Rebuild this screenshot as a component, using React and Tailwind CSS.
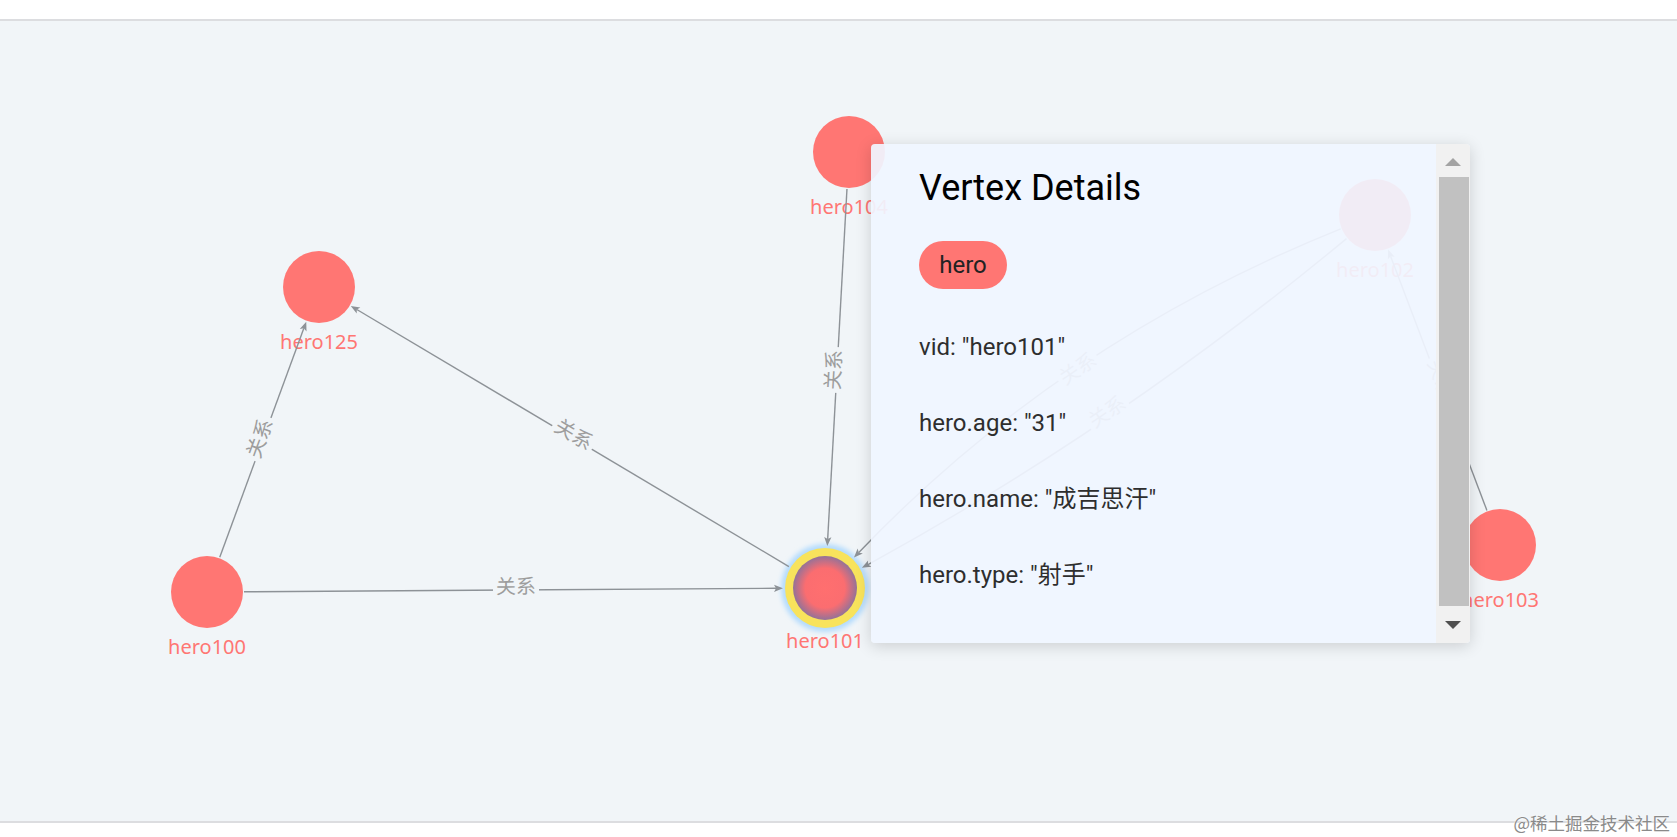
import React from 'react';

const RED = '#ff7673';
const EDGE = '#8d9297';
const CANVAS = '#f1f5f8';

const nodes = [
  { id: 'hero125', x: 319, y: 266 },
  { id: 'hero104', x: 849, y: 131 },
  { id: 'hero100', x: 207, y: 571 },
  { id: 'hero101', x: 825, y: 567, r: 41, active: true },
  { id: 'hero102', x: 1375, y: 194 },
  { id: 'hero103', x: 1500, y: 524 },
];
const byId = Object.fromEntries(nodes.map((n) => [n.id, n]));

const edges = [
  { s: 'hero100', t: 'hero125' },
  { s: 'hero101', t: 'hero125' },
  { s: 'hero100', t: 'hero101' },
  { s: 'hero104', t: 'hero101' },
  { s: 'hero102', t: 'hero101', bend: 72 },
  { s: 'hero102', t: 'hero101', bend: -32 },
  { s: 'hero103', t: 'hero102' },
];

// geometry of one edge: line (or quad curve), arrow head and label spot
function geom(e) {
  const a = byId[e.s];
  const b = byId[e.t];
  const ra = (a.r || 36) + 1;
  const rb = (b.r || 36) + 1;
  const dx = b.x - a.x;
  const dy = b.y - a.y;
  const len = Math.hypot(dx, dy);
  const nx = -dy / len;
  const ny = dx / len;
  const bend = e.bend || 0;
  const cx = (a.x + b.x) / 2 + nx * bend;
  const cy = (a.y + b.y) / 2 + ny * bend;

  const d1 = Math.hypot(cx - a.x, cy - a.y);
  const sx = (cx - a.x) / d1;
  const sy = (cy - a.y) / d1;
  const d2 = Math.hypot(b.x - cx, b.y - cy);
  const ex = (b.x - cx) / d2;
  const ey = (b.y - cy) / d2;

  const p0 = [a.x + sx * ra, a.y + sy * ra];
  const tip = [b.x - ex * rb, b.y - ey * rb];
  const notch = [tip[0] - ex * 7, tip[1] - ey * 7];
  const base = [tip[0] - ex * 9, tip[1] - ey * 9];
  const arrow = [
    tip,
    [base[0] - ey * 3.6, base[1] + ex * 3.6],
    notch,
    [base[0] + ey * 3.6, base[1] - ex * 3.6],
  ]
    .map((p) => p.join(','))
    .join(' ');

  const d = bend
    ? `M${p0[0]},${p0[1]} Q${cx},${cy} ${notch[0]},${notch[1]}`
    : `M${p0[0]},${p0[1]} L${notch[0]},${notch[1]}`;

  const lx = bend ? 0.25 * a.x + 0.5 * cx + 0.25 * b.x : (a.x + b.x) / 2;
  const ly = bend ? 0.25 * a.y + 0.5 * cy + 0.25 * b.y : (a.y + b.y) / 2;
  let ang = (Math.atan2(dy, dx) * 180) / Math.PI;
  if (ang > 90) ang -= 180;
  if (ang < -90) ang += 180;

  return { d, arrow, lx, ly, ang };
}

const Graph = () => (
  <svg className="absolute inset-0" width="1677" height="800">
    <defs>
      <filter id="glow" x="-50%" y="-50%" width="200%" height="200%">
        <feGaussianBlur stdDeviation="2.5" />
      </filter>
      <radialGradient id="activeFill" cx="50%" cy="50%" r="50%">
        <stop offset="0%" stopColor="#ff6f6f" />
        <stop offset="62%" stopColor="#fb6d70" />
        <stop offset="100%" stopColor="#947298" />
      </radialGradient>
    </defs>

    {nodes.map((n) => (
      <g key={n.id}>
        {n.active ? (
          <>
            <circle cx={n.x} cy={n.y} r="44" fill="#b3dbfd" filter="url(#glow)" />
            <circle cx={n.x} cy={n.y} r="40" fill="#f8e35c" />
            <circle cx={n.x} cy={n.y} r="32" fill="url(#activeFill)" />
          </>
        ) : (
          <circle cx={n.x} cy={n.y} r="36" fill={RED} />
        )}
        <text
          x={n.x}
          y={n.y + (n.active ? 60 : 62)}
          textAnchor="middle"
          fontSize="20"
          fontFamily="'Noto Sans', sans-serif"
          fill={RED}
        >
          {n.id}
        </text>
      </g>
    ))}

    {edges.map((e, i) => {
      const g = geom(e);
      return (
        <g key={i}>
          <path d={g.d} fill="none" stroke={EDGE} strokeWidth="1.4" />
          <polygon points={g.arrow} fill={EDGE} />
          <g transform={`translate(${g.lx} ${g.ly}) rotate(${g.ang})`}>
            <rect x="-23" y="-16" width="46" height="23" fill={CANVAS} />
            <text
              y="-5"
              textAnchor="middle"
              dominantBaseline="central"
              fontSize="20"
              fontFamily="'Noto Sans CJK SC', sans-serif"
              fill="#9d9d9d"
            >
              关系
            </text>
          </g>
        </g>
      );
    })}
  </svg>
);

const props = [
  ['vid', 'hero101'],
  ['hero.age', '31'],
  ['hero.name', '成吉思汗'],
  ['hero.type', '射手'],
];

const DetailsPanel = () => (
  <div className="absolute left-[871px] top-[123px] w-[599px] h-[499px] flex overflow-hidden rounded-[4px] bg-[rgba(240,245,255,0.93)] shadow-[0_3px_16px_rgba(0,0,0,0.16)] font-['Roboto','Noto_Sans_CJK_SC',sans-serif]">
    <div className="flex-1 pl-[48px] pt-[23px]">
      <h2 className="h-[42px] leading-[42px] text-[36px] font-normal text-black">Vertex Details</h2>
      <div className="mt-[32px] w-[88px] h-[48px] rounded-full bg-[#ff7673] flex items-center justify-center text-[24px] text-[#222]">
        hero
      </div>
      <div className="mt-[20px]">
        {props.map(([k, v]) => (
          <div key={k} className="h-[76px] flex items-center text-[24px] text-[#2e2e2e]">
            {k}: "{v}"
          </div>
        ))}
      </div>
    </div>

    {/* scrollbar */}
    <div className="w-[34px] bg-[#f1f1f1] flex flex-col">
      <div className="h-[33px] flex items-center justify-center pt-[2px]">
        <svg width="16" height="8" viewBox="0 0 16 8">
          <path d="M8 0 L16 8 L0 8 Z" fill="#a3a3a3" />
        </svg>
      </div>
      <div className="flex-1 ml-[3px] mr-[1px] bg-[#c1c1c1]" />
      <div className="h-[37px] flex items-center justify-center">
        <svg width="16" height="8" viewBox="0 0 16 8">
          <path d="M0 0 L16 0 L8 8 Z" fill="#505050" />
        </svg>
      </div>
    </div>
  </div>
);

export default function App() {
  return (
    <div className="relative w-full h-[837px] bg-white overflow-hidden">
      <div className="h-[19px]" />
      <div className="relative h-[804px] border-y-2 border-[#dcdde0] bg-[#f1f5f8]">
        <Graph />
        <DetailsPanel />
      </div>
      <div className="absolute right-[7px] bottom-[6px] text-[17.5px] leading-none text-[#8a8a8a] font-['Noto_Sans_CJK_SC',sans-serif] [text-shadow:0_0_2px_#fff]">
        @稀土掘金技术社区
      </div>
    </div>
  );
}
